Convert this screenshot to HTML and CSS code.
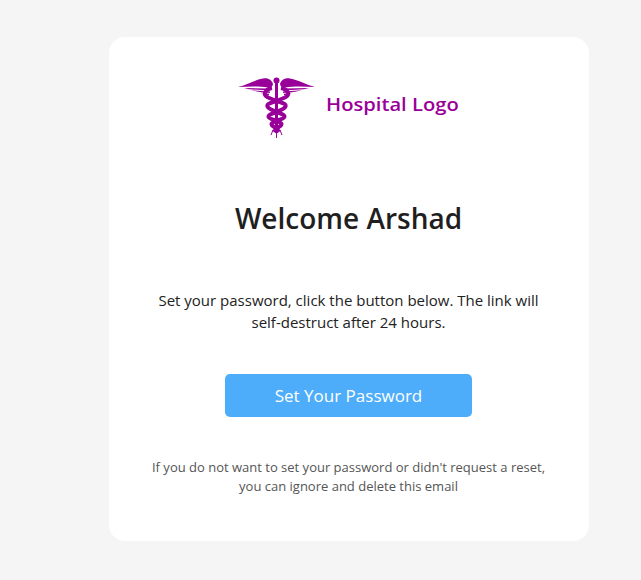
FILE: index.html
```html
<!DOCTYPE html>
<html lang="en">

<head>
  <meta charset="UTF-8">
  <title>Set your password</title>
  <link rel="stylesheet" href="styles.css">
</head>

<body>
  <div class="card">
    <div class="logo">
      <svg class="logo-icon" width="79" height="62" viewBox="0 0 79 62">
        <defs>
          <g id="wing">
            <path d="M1 11 C10 9 17 4 26 2.500 C31 1.500 35 4 36 8 C35.500 11 33 12 31 11.500 C22 10 12 10.500 1 11 Z"/>
            <path d="M7 12 L31 12.500 L33 14.500 L12 13.200 Z"/>
            <path d="M14 14.200 L33 15.500 L33 17 L21 15.700 Z"/>
            <path d="M23 16.500 L32 17.800 L32 19.500 Z"/>
            <path d="M35 12 C28 13.500 25 19 31 21.500 L39.500 25 C45 27 49.500 27.500 48.500 30.500 C47 34 41 34.500 39.500 36 C35 38 31.500 38.500 31.500 40.500 C31.500 43 37 43.500 39.500 45 C42 46 44.500 46.500 44.500 48 C44.500 50.500 41 51 39.500 52.500 L37 56" fill="none" stroke="#990099" stroke-width="4"/>
            <path d="M36 54 L34 59" fill="none" stroke="#990099" stroke-width="1"/>
          </g>
        </defs>
        <g fill="#990099">
          <use href="#wing"/>
          <use href="#wing" transform="matrix(-1 0 0 1 79 0)"/>
          <circle cx="39.5" cy="4.5" r="3"/>
          <rect x="38" y="6" width="3" height="50"/>
          <rect x="39" y="54" width="1" height="8"/>
        </g>
      </svg>
      <span class="logo-text">Hospital Logo</span>
    </div>

    <h1 class="title">Welcome Arshad</h1>

    <p class="message">Set your password, click the button below. The link will self-destruct after 24 hours.</p>

    <a class="btn">Set Your Password</a>

    <p class="note">If you do not want to set your password or didn't request a reset, you can ignore and delete this email</p>
  </div>
</body>

</html>
```

FILE: styles.css
```css
* {
  margin: 0;
  padding: 0;
  box-sizing: border-box;
}

body {
  height: 580px;
  overflow: hidden;
  padding: 37px 0 0 109px;
  background: #f5f5f5;
  font-family: "Open Sans", sans-serif;
}

.card {
  display: flex;
  flex-direction: column;
  align-items: center;
  width: 480px;
  height: 504px;
  padding: 39px 1px 0 0;
  background: #fff;
  border-radius: 16px;
  text-align: center;
}

.logo {
  display: flex;
  align-items: flex-start;
  gap: 10px;
  height: 62px;
  margin-right: 3px;
}

.logo-text {
  width: 131px;
  margin-top: 16px;
  color: #990099;
  font-size: 18px;
  line-height: 24px;
  font-weight: 600;
  white-space: nowrap;
  text-align: left;
  transform: scaleX(1.12);
  transform-origin: left;
}

.title {
  margin-top: 60px;
  color: #1f1f1f;
  font-size: 28px;
  line-height: 40px;
  font-weight: 600;
}

.message {
  width: 400px;
  margin-top: 51px;
  color: #222;
  font-size: 15px;
  line-height: 22px;
}

.btn {
  display: block;
  width: 247px;
  height: 43px;
  margin-top: 41px;
  background: #4dadfb;
  border-radius: 5px;
  color: #fff;
  font-size: 17px;
  line-height: 43px;
}

.note {
  width: 400px;
  margin-top: 41px;
  color: #555;
  font-size: 13px;
  line-height: 19px;
}
```
